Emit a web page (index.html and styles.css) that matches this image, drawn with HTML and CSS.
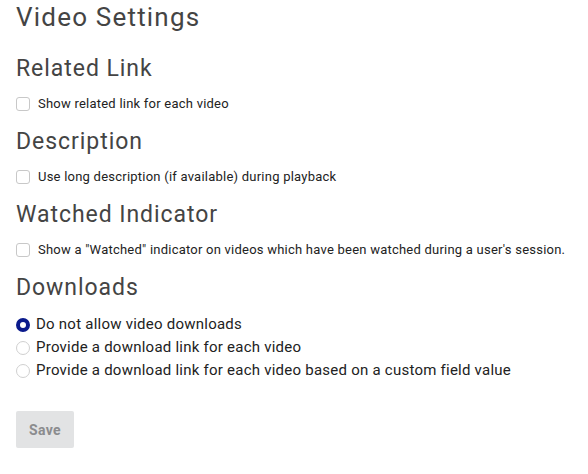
FILE: index.html
```html
<!DOCTYPE html>
<html lang="en">
<head>
  <meta charset="UTF-8" />
  <title>Video Settings</title>
  <link rel="stylesheet" href="styles.css">
</head>
<body>
  <div class="settings">
    <h1>Video Settings</h1>

    <div class="section">
      <h2>Related Link</h2>
      <label class="check"><input type="checkbox"> Show related link for each video</label>
    </div>

    <div class="section">
      <h2>Description</h2>
      <label class="check"><input type="checkbox"> Use long description (if available) during playback</label>
    </div>

    <div class="section">
      <h2>Watched Indicator</h2>
      <label class="check"><input type="checkbox"> Show a "Watched" indicator on videos which have been watched during a user's session.</label>
    </div>

    <div class="section">
      <h2>Downloads</h2>
      <div class="radios">
        <label class="radio"><input type="radio" name="dl" checked> Do not allow video downloads</label>
        <label class="radio"><input type="radio" name="dl"> Provide a download link for each video</label>
        <label class="radio"><input type="radio" name="dl"> Provide a download link for each video based on a custom field value</label>
      </div>
    </div>

    <button class="save" disabled>Save</button>
  </div>
</body>
</html>
```

FILE: styles.css
```css
body {
  margin: 0;
  font-family: 'Roboto', 'Liberation Sans', sans-serif;
  color: #222;
  background: #fff;
}
.settings {
  padding: 1px 16px 0;
}
h1 {
  font-size: 26px;
  font-weight: 400;
  line-height: 32px;
  letter-spacing: 1.2px;
  color: #444;
  margin: 0 0 22px;
}
h2 {
  font-size: 23px;
  font-weight: 400;
  line-height: 28px;
  letter-spacing: 0.95px;
  color: #444;
  margin: 0 0 11px;
}
.section {
  margin-top: 14px;
}
.check {
  display: flex;
  align-items: center;
  gap: 8px;
  font-size: 13px;
  line-height: 20px;
  letter-spacing: 0.23px;
}
.check input {
  appearance: none;
  width: 14px;
  height: 14px;
  margin: 0;
  border: 1px solid #c8c8c8;
  border-radius: 3px;
  background: #fff;
}
.radios {
  display: flex;
  flex-direction: column;
  margin-top: 2px;
}
.radio {
  display: flex;
  align-items: center;
  gap: 6px;
  font-size: 15px;
  line-height: 23px;
  letter-spacing: 0.24px;
}
.radio input {
  appearance: none;
  width: 14px;
  height: 14px;
  margin: 0;
  border: 1px solid #d0d0d0;
  border-radius: 50%;
  background: #fff;
}
.radio input:checked {
  border: 4.5px solid #0a1a8c;
}
.save {
  margin-top: 29px;
  width: 58px;
  height: 37px;
  border: none;
  border-radius: 2px;
  background: #e2e3e4;
  color: #8b8c8e;
  font-family: inherit;
  font-size: 14px;
  font-weight: 700;
  letter-spacing: 0.3px;
}
```
